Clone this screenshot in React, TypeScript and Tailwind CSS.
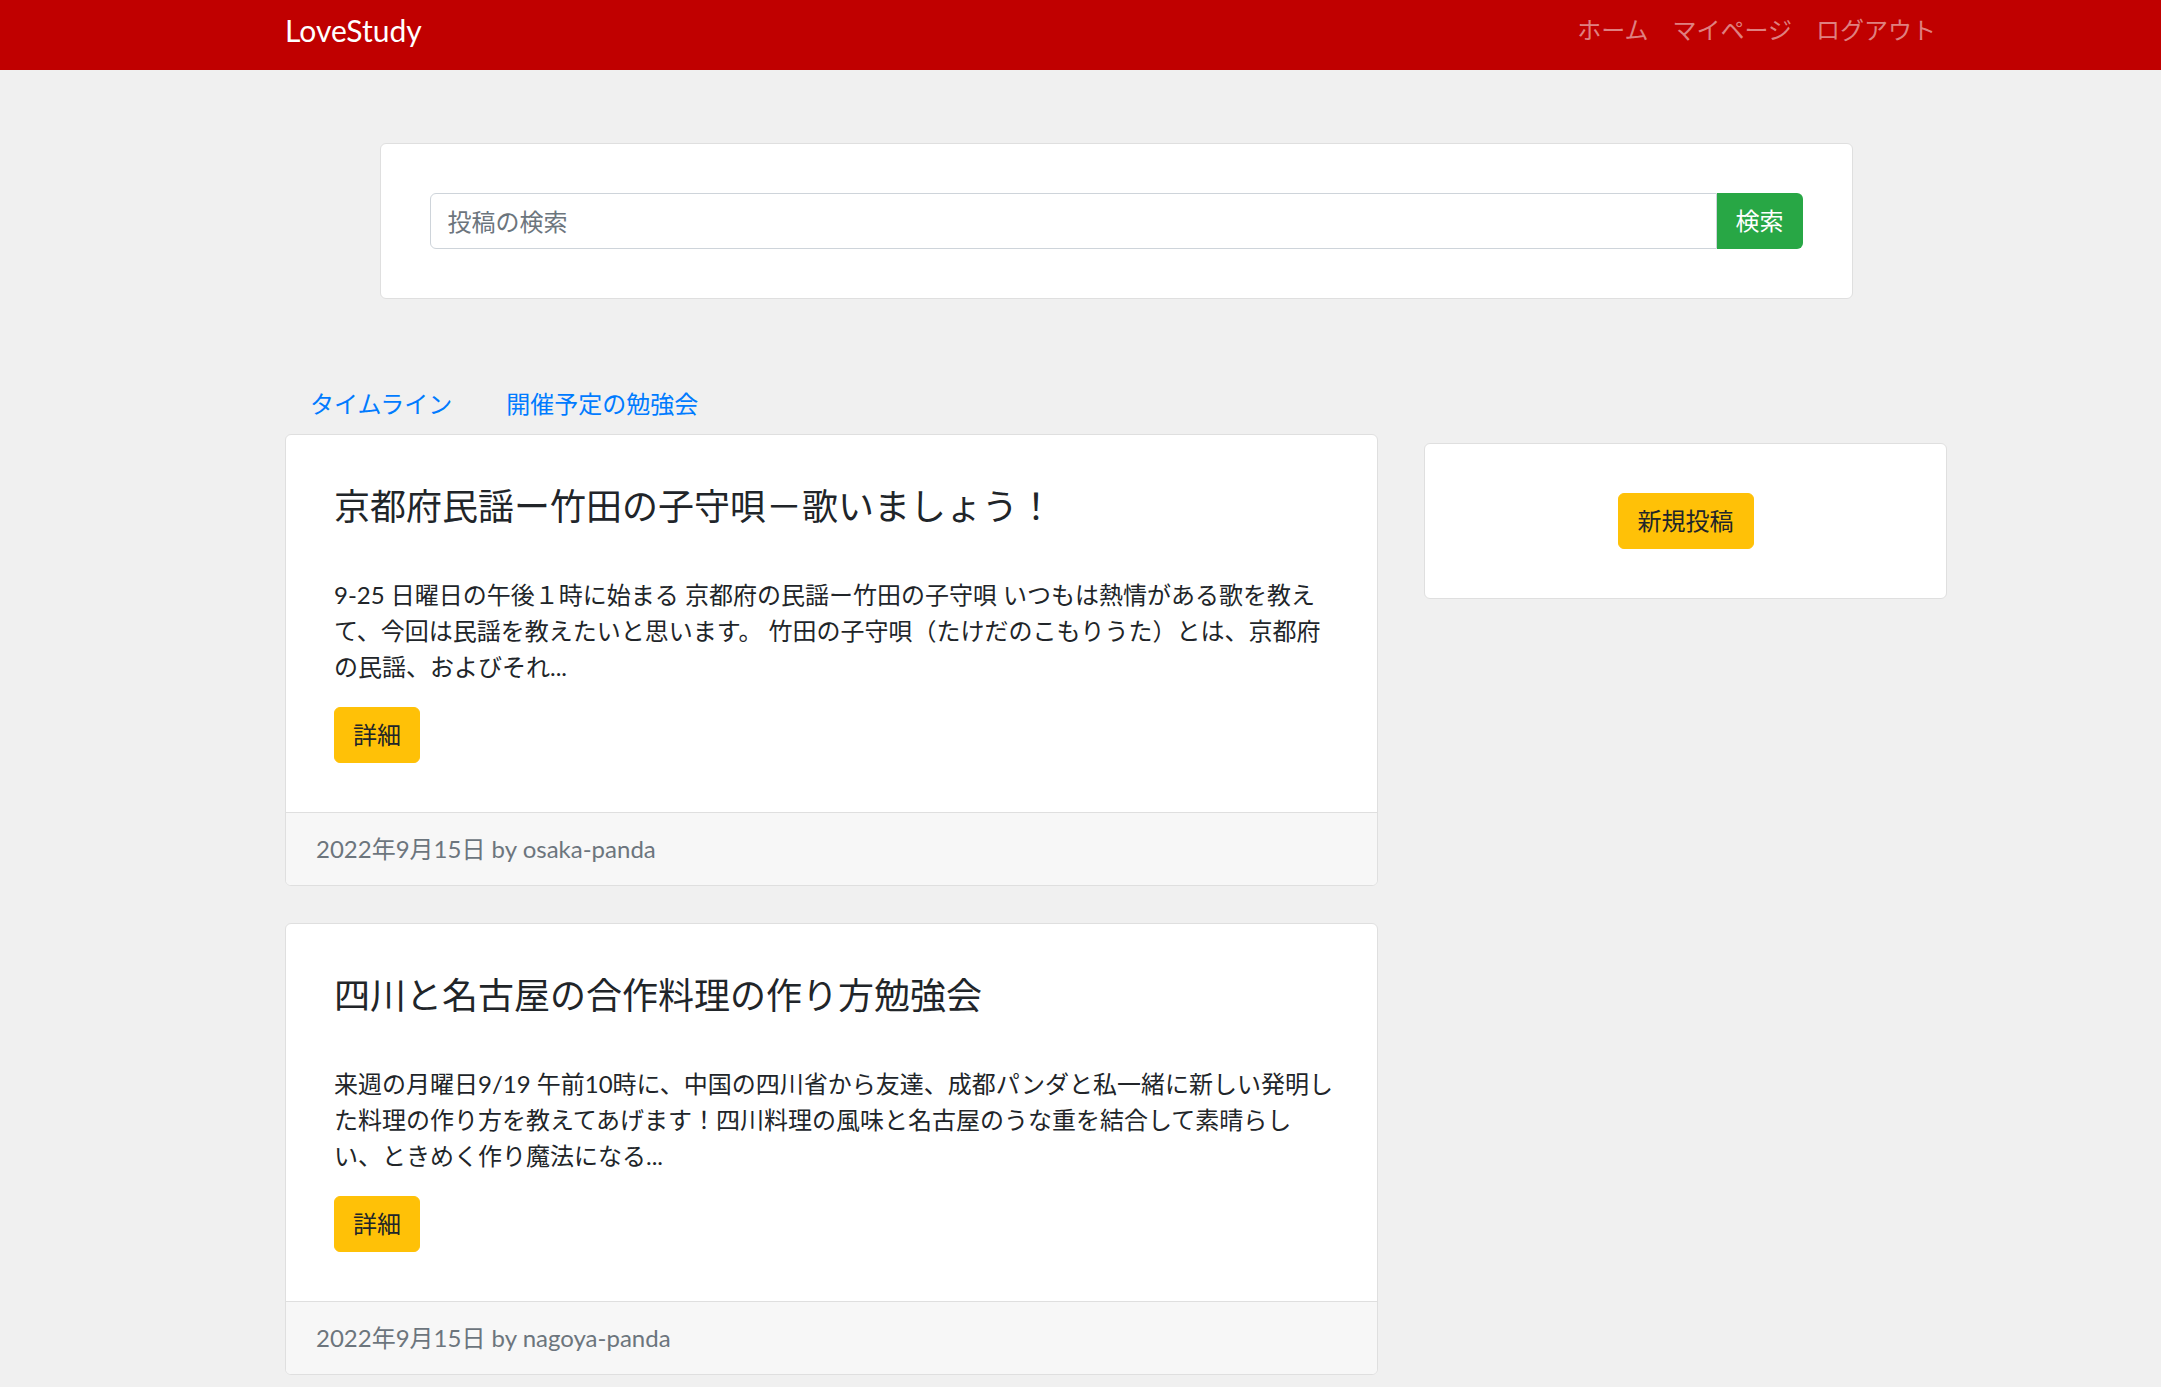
import React from 'react';

type Post = {
  title: string;
  lines: string[];
  date: string;
  author: string;
};

const posts: Post[] = [
  {
    title: '京都府民謡ー竹田の子守唄－歌いましょう！',
    lines: [
      '9-25 日曜日の午後１時に始まる 京都府の民謡ー竹田の子守唄 いつもは熱情がある歌を教え',
      'て、今回は民謡を教えたいと思います。 竹田の子守唄（たけだのこもりうた）とは、京都府',
      'の民謡、およびそれ...',
    ],
    date: '2022年9月15日',
    author: 'osaka-panda',
  },
  {
    title: '四川と名古屋の合作料理の作り方勉強会',
    lines: [
      '来週の月曜日9/19 午前10時に、中国の四川省から友達、成都パンダと私一緒に新しい発明し',
      'た料理の作り方を教えてあげます！四川料理の風味と名古屋のうな重を結合して素晴らし',
      'い、ときめく作り魔法になる...',
    ],
    date: '2022年9月15日',
    author: 'nagoya-panda',
  },
];

const PostCard = ({ post }: { post: Post }) => (
  <div className="bg-white border border-[#dfdfdf] rounded-[6px] overflow-hidden">
    <div className="pt-[50px] px-[48px] pb-[49px]">
      <h4 className="text-[36px] leading-[1.2] text-[#212529] mb-[49px]">{post.title}</h4>
      <p className="text-[24px] leading-[36px] text-[#212529] mb-[22px]">
        {post.lines.map(line => (
          <span key={line} className="block whitespace-nowrap">{line}</span>
        ))}
      </p>
      <button className="h-[56px] px-[18px] bg-[#ffc107] border border-[#ffc107] rounded-[6px] text-[24px] leading-[36px] text-[#212529]">
        詳細
      </button>
    </div>
    <div className="bg-[#f7f7f7] border-t border-[#dfdfdf] px-[30px] py-[18px] text-[24px] leading-[36px] text-[#6c757d]">
      {post.date} by {post.author}
    </div>
  </div>
);

export default function App() {
  return (
    <div className="min-h-screen bg-[#f0f0f0] font-[Lato,'Noto_Sans_CJK_JP',sans-serif] pb-[40px]">
      {/* Navbar */}
      <nav className="bg-[#c00000] h-[70px]">
        <div className="ml-[285px] w-[1662px] h-full flex items-center justify-between">
          <span className="text-white text-[30px] leading-none pb-[10px]">LoveStudy</span>
          <div className="flex items-center text-[24px] text-[#df8080] pb-[10px]">
            <span className="px-[12px]">ホーム</span>
            <span className="px-[12px]">マイページ</span>
            <span className="pl-[12px] pr-[11px]">ログアウト</span>
          </div>
        </div>
      </nav>

      <div className="ml-[285px] w-[1662px]">
        {/* Search */}
        <div className="mt-[73px] mx-auto w-[1473px] bg-white border border-[#dfdfdf] rounded-[6px] p-[49px]">
          <div className="flex">
            <input
              placeholder="投稿の検索"
              className="flex-1 h-[56px] px-[17px] border border-[#ced4da] rounded-l-[6px] text-[24px] text-[#495057] placeholder:text-[#6c757d] outline-none"
            />
            <button className="h-[56px] w-[86px] bg-[#28a745] rounded-r-[6px] text-white text-[24px]">
              検索
            </button>
          </div>
        </div>

        <div className="mt-[75px] flex items-start gap-[46px]">
          {/* Main column */}
          <div className="w-[1093px]">
            <div className="flex text-[24px] leading-[36px] text-[#007bff] h-[60px] items-center">
              <span className="px-[25px]">タイムライン</span>
              <span className="px-[29px]">開催予定の勉強会</span>
            </div>
            <PostCard post={posts[0]} />
            <div className="mt-[37px]">
              <PostCard post={posts[1]} />
            </div>
          </div>

          {/* Sidebar */}
          <div className="w-[523px] mt-[69px] bg-white border border-[#dfdfdf] rounded-[6px] p-[49px] flex justify-center">
            <button className="h-[56px] px-[19px] bg-[#ffc107] border border-[#ffc107] rounded-[6px] text-[24px] leading-[36px] text-[#212529]">
              新規投稿
            </button>
          </div>
        </div>
      </div>
    </div>
  );
}
